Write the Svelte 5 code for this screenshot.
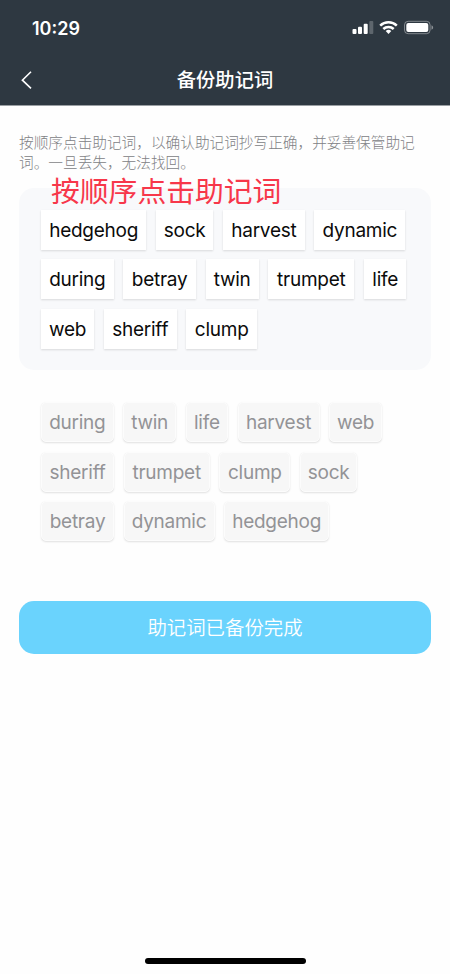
<script>
  const selected = ['hedgehog', 'sock', 'harvest', 'dynamic', 'during', 'betray', 'twin', 'trumpet', 'life', 'web', 'sheriff', 'clump'];
  const options = ['during', 'twin', 'life', 'harvest', 'web', 'sheriff', 'trumpet', 'clump', 'sock', 'betray', 'dynamic', 'hedgehog'];
  const widths = {
    hedgehog: 105.3, sock: 57.6, harvest: 82, dynamic: 91, during: 72.6, betray: 73, twin: 53.1,
    trumpet: 86.3, life: 42.4, web: 53.2, sheriff: 73, clump: 71
  };
</script>

<div class="screen">
  <header>
    <div class="status">
      <span class="time">10:29</span>
      <svg class="indicators" width="82" height="16" viewBox="0 0 82 16" fill="#fff">
        <rect x="0.5" y="9" width="4" height="5" rx="1" />
        <rect x="6" y="6.8" width="4" height="7.2" rx="1" />
        <rect x="11.7" y="3.7" width="4" height="10.3" rx="1" />
        <rect x="17.3" y="1" width="4" height="13" rx="1" opacity=".23" />
        <g fill="none" stroke="#fff" stroke-width="2.5">
          <path d="M28.2 5.7a12 12 0 0 1 16.6 0" />
          <path d="M31.3 9a7.5 7.5 0 0 1 10.4 0" />
        </g>
        <path d="M33.7 11.1a4.2 4.2 0 0 1 5.6 0L36.5 14z" />
        <rect x="52.5" y="1.3" width="25.6" height="12.4" rx="3.6" fill="none" stroke="#fff" stroke-opacity=".4" />
        <rect x="54.3" y="3" width="22" height="9" rx="2" />
        <path d="M79.5 5.3c2.2 1 2.2 3.6 0 4.5z" opacity=".45" />
      </svg>
    </div>
    <div class="nav">
      <svg class="back" width="14" height="20" viewBox="0 0 14 20" fill="none" stroke="#fff" stroke-width="1.6"><path d="M12 1.8 3.4 10.2l8.6 8.2" /></svg>
      <h1>备份助记词</h1>
    </div>
  </header>

  <main>
    <p class="tip">按顺序点击助记词，以确认助记词抄写正确，并妥善保管助记词。一旦丢失，无法找回。</p>
    <section class="words panel">
      <span class="note">按顺序点击助记词</span>
      {#each selected as word}
        <span class="chip" style:width="{widths[word]}px">{word}</span>
      {/each}
    </section>
    <section class="words options">
      {#each options as word}
        <span class="chip" style:width="{widths[word]}px">{word}</span>
      {/each}
    </section>
    <button>助记词已备份完成</button>
  </main>
  <div class="home"></div>
</div>

<style>
  :global(body) { margin: 0; background: #fff; }
  .screen {
    width: 450px; height: 974px; display: flex; flex-direction: column; overflow: hidden;
    background: #fefefe; font-family: Inter, "Noto Sans CJK SC", sans-serif;
  }
  header { height: 105px; background: #2e3841; border-bottom: 1px solid #9a9fa3; box-sizing: content-box; color: #fff; flex: none; }
  .status { height: 53px; padding: 2px 16px 0 32px; display: flex; align-items: center; justify-content: space-between; box-sizing: border-box; }
  .time { font-size: 18px; font-weight: 600; padding-top: 1px; }
  .nav { height: 52px; padding-top: 1px; box-sizing: border-box; display: grid; grid-template-columns: 60px 1fr 60px; align-items: center; }
  .back { margin-left: 19px; }
  h1 { margin: 0; padding-top: 1px; text-align: center; font-size: 19.3px; line-height: 28px; font-weight: 500; }
  main { flex: 1; padding: 28px 19px 0; }
  .tip { margin: 0 0 14.5px; font-size: 14.67px; line-height: 19.5px; color: #808184; font-weight: 300; width: 412px; }
  .words { display: flex; flex-wrap: wrap; align-content: flex-start; gap: 9.5px; box-sizing: border-box; padding: 22px 20px 0 22px; }
  .panel { position: relative; height: 182px; background: #f8f9fb; border-radius: 15px; }
  .note { position: absolute; left: 32px; top: -17px; font-size: 28.8px; line-height: 42px; color: #f7374a; white-space: nowrap; }
  .chip { height: 40px; padding-top: 1px; display: flex; align-items: center; justify-content: center; box-sizing: border-box; font-size: 19px; letter-spacing: -.25px; background: #fff; color: #0b0b0b; box-shadow: 0 1px 2px rgba(0,0,0,.13); white-space: nowrap; }
  .options { height: 231px; padding-top: 32.5px; }
  .options .chip { background: #f7f7f7; color: #939396; border: 1px solid #fcfcfc; border-radius: 5px; box-shadow: 0 1px 2px rgba(0,0,0,.12); }
  button { display: block; width: 412px; height: 53px; padding: 2px 0 0; border: 0; border-radius: 15px; background: #6ad3fd; color: #fff; font: 350 19.4px/51px Inter, "Noto Sans CJK SC", sans-serif; }
  .home { width: 161px; height: 6px; margin: 0 auto 10px; border-radius: 3px; background: #000; flex: none; }
</style>
